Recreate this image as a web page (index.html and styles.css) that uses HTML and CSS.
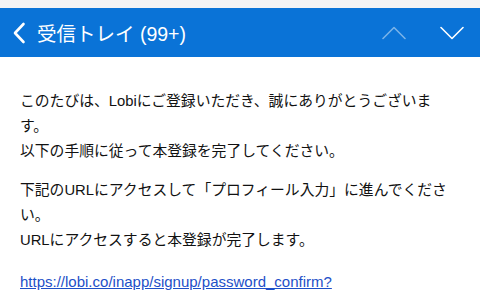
FILE: index.html
```html
<!DOCTYPE html>
<html lang="ja">
<head>
<meta charset="utf-8">
<link rel="stylesheet" href="styles.css">
</head>
<body>
<div class="status"></div>
<header class="bar">
  <div class="back">
    <svg class="chev-left" width="14" height="22" viewBox="0 0 14 22"><path d="M11.5 2 L3 11 L11.5 20" fill="none" stroke="#fff" stroke-width="2.6" stroke-linecap="round" stroke-linejoin="round"/></svg>
    <span class="title">受信トレイ (99+)</span>
  </div>
  <div class="nav">
    <svg class="chev up" width="24" height="14" viewBox="0 0 24 14"><path d="M1 12.5 L12 1.5 L23 12.5" fill="none" stroke="#fff" stroke-width="1.6" stroke-linecap="round" stroke-linejoin="round"/></svg>
    <svg class="chev" width="24" height="14" viewBox="0 0 24 14"><path d="M1 1.5 L12 12.5 L23 1.5" fill="none" stroke="#fff" stroke-width="1.6" stroke-linecap="round" stroke-linejoin="round"/></svg>
  </div>
</header>
<main class="content">
  <p class="para">このたびは、Lobiにご登録いただき、誠にありがとうございま<br>す。<br>以下の手順に従って本登録を完了してください。</p>
  <p class="para">下記のURLにアクセスして「プロフィール入力」に進んでくださ<br>い。<br>URLにアクセスすると本登録が完了します。</p>
  <p class="para link-para"><a class="link" href="#">https://lobi.co/inapp/signup/password_confirm?</a></p>
</main>
</body>
</html>
```
FILE: styles.css
```css
html, body {
  margin: 0;
  padding: 0;
  background: #ffffff;
  width: 480px;
  height: 291px;
  overflow: hidden;
  font-family: "Liberation Sans", "Noto Sans CJK JP", sans-serif;
}
.status {
  height: 8px;
  background: #f3f3f5;
}
.bar {
  height: 49px;
  background: #0a73d7;
  display: flex;
  align-items: center;
  justify-content: space-between;
  padding: 0 16px 0 12px;
  color: #fff;
}
.back {
  display: flex;
  align-items: center;
  gap: 11px;
}
.title {
  font-size: 19.5px;
}
.nav {
  display: flex;
  align-items: center;
  gap: 34px;
}
.chev.up {
  opacity: 0.45;
}
.content {
  padding: 32px 20px 0 20px;
  color: #111111;
  font-size: 14.8px;
  line-height: 24.8px;
}
.para {
  margin: 0 0 15px 0;
  white-space: nowrap;
}
.link-para {
  margin: 18px 0 0 0;
  font-size: 15px;
  line-height: 22px;
}
.link {
  color: #1d4fc8;
  text-decoration: underline;
}
```
